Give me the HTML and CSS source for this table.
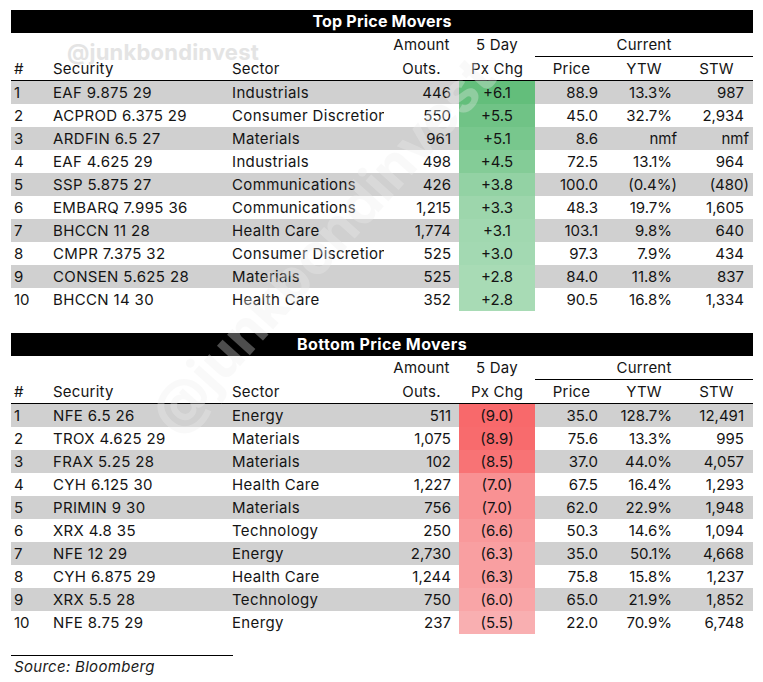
FILE: index.html
```html
<!DOCTYPE html>
<html>
<head>
<meta charset="utf-8">
<link rel="stylesheet" href="styles.css">
</head>
<body>
<div class="page">
  <div class="bar">Top Price Movers</div>
  <table class="movers">
    <colgroup>
      <col class="c-rank"><col class="c-sec"><col class="c-sector"><col class="c-amt"><col class="c-chg"><col class="c-px"><col class="c-ytw"><col class="c-stw">
    </colgroup>
    <thead>
      <tr class="h1"><th></th><th></th><th></th><th>Amount</th><th>5 Day</th><th colspan="3" class="current">Current</th></tr>
      <tr class="h2"><th class="l rank">#</th><th class="l">Security</th><th class="l">Sector</th><th>Outs.</th><th>Px Chg</th><th>Price</th><th>YTW</th><th>STW</th></tr>
    </thead>
    <tbody>
      <tr><td class="rank">1</td><td class="t">EAF 9.875 29</td><td class="t">Industrials</td><td class="n amt">446</td><td class="chg" style="background:#63be7b">+6.1</td><td class="n px">88.9</td><td class="n ytw">13.3%</td><td class="n stw">987</td></tr>
      <tr><td class="rank">2</td><td class="t">ACPROD 6.375 29</td><td class="t">Consumer Discretionary</td><td class="n amt">550</td><td class="chg" style="background:#70c386">+5.5</td><td class="n px">45.0</td><td class="n ytw">32.7%</td><td class="n stw">2,934</td></tr>
      <tr><td class="rank">3</td><td class="t">ARDFIN 6.5 27</td><td class="t">Materials</td><td class="n amt">961</td><td class="chg" style="background:#78c78d">+5.1</td><td class="n px">8.6</td><td class="n ytw np">nmf</td><td class="n stw np">nmf</td></tr>
      <tr><td class="rank">4</td><td class="t">EAF 4.625 29</td><td class="t">Industrials</td><td class="n amt">498</td><td class="chg" style="background:#84cc97">+4.5</td><td class="n px">72.5</td><td class="n ytw">13.1%</td><td class="n stw">964</td></tr>
      <tr><td class="rank">5</td><td class="t">SSP 5.875 27</td><td class="t">Communications</td><td class="n amt">426</td><td class="chg" style="background:#93d2a4">+3.8</td><td class="n px">100.0</td><td class="n ytw np">(0.4%)</td><td class="n stw np">(480)</td></tr>
      <tr><td class="rank">6</td><td class="t">EMBARQ 7.995 36</td><td class="t">Communications</td><td class="n amt">1,215</td><td class="chg" style="background:#9dd6ac">+3.3</td><td class="n px">48.3</td><td class="n ytw">19.7%</td><td class="n stw">1,605</td></tr>
      <tr><td class="rank">7</td><td class="t">BHCCN 11 28</td><td class="t">Health Care</td><td class="n amt">1,774</td><td class="chg" style="background:#a1d8b0">+3.1</td><td class="n px">103.1</td><td class="n ytw">9.8%</td><td class="n stw">640</td></tr>
      <tr><td class="rank">8</td><td class="t">CMPR 7.375 32</td><td class="t">Consumer Discretionary</td><td class="n amt">525</td><td class="chg" style="background:#a3d9b2">+3.0</td><td class="n px">97.3</td><td class="n ytw">7.9%</td><td class="n stw">434</td></tr>
      <tr><td class="rank">9</td><td class="t">CONSEN 5.625 28</td><td class="t">Materials</td><td class="n amt">525</td><td class="chg" style="background:#a8dbb5">+2.8</td><td class="n px">84.0</td><td class="n ytw">11.8%</td><td class="n stw">837</td></tr>
      <tr><td class="rank">10</td><td class="t">BHCCN 14 30</td><td class="t">Health Care</td><td class="n amt">352</td><td class="chg" style="background:#a8dbb5">+2.8</td><td class="n px">90.5</td><td class="n ytw">16.8%</td><td class="n stw">1,334</td></tr>
    </tbody>
  </table>

  <div class="bar second">Bottom Price Movers</div>
  <table class="movers">
    <colgroup>
      <col class="c-rank"><col class="c-sec"><col class="c-sector"><col class="c-amt"><col class="c-chg"><col class="c-px"><col class="c-ytw"><col class="c-stw">
    </colgroup>
    <thead>
      <tr class="h1"><th></th><th></th><th></th><th>Amount</th><th>5 Day</th><th colspan="3" class="current">Current</th></tr>
      <tr class="h2"><th class="l rank">#</th><th class="l">Security</th><th class="l">Sector</th><th>Outs.</th><th>Px Chg</th><th>Price</th><th>YTW</th><th>STW</th></tr>
    </thead>
    <tbody>
      <tr><td class="rank">1</td><td class="t">NFE 6.5 26</td><td class="t">Energy</td><td class="n amt">511</td><td class="chg" style="background:#f8696b">(9.0)</td><td class="n px">35.0</td><td class="n ytw">128.7%</td><td class="n stw">12,491</td></tr>
      <tr><td class="rank">2</td><td class="t">TROX 4.625 29</td><td class="t">Materials</td><td class="n amt">1,075</td><td class="chg" style="background:#f86b6d">(8.9)</td><td class="n px">75.6</td><td class="n ytw">13.3%</td><td class="n stw">995</td></tr>
      <tr><td class="rank">3</td><td class="t">FRAX 5.25 28</td><td class="t">Materials</td><td class="n amt">102</td><td class="chg" style="background:#f87375">(8.5)</td><td class="n px">37.0</td><td class="n ytw">44.0%</td><td class="n stw">4,057</td></tr>
      <tr><td class="rank">4</td><td class="t">CYH 6.125 30</td><td class="t">Health Care</td><td class="n amt">1,227</td><td class="chg" style="background:#f99193">(7.0)</td><td class="n px">67.5</td><td class="n ytw">16.4%</td><td class="n stw">1,293</td></tr>
      <tr><td class="rank">5</td><td class="t">PRIMIN 9 30</td><td class="t">Materials</td><td class="n amt">756</td><td class="chg" style="background:#f99193">(7.0)</td><td class="n px">62.0</td><td class="n ytw">22.9%</td><td class="n stw">1,948</td></tr>
      <tr><td class="rank">6</td><td class="t">XRX 4.8 35</td><td class="t">Technology</td><td class="n amt">250</td><td class="chg" style="background:#f9999b">(6.6)</td><td class="n px">50.3</td><td class="n ytw">14.6%</td><td class="n stw">1,094</td></tr>
      <tr><td class="rank">7</td><td class="t">NFE 12 29</td><td class="t">Energy</td><td class="n amt">2,730</td><td class="chg" style="background:#f99fa1">(6.3)</td><td class="n px">35.0</td><td class="n ytw">50.1%</td><td class="n stw">4,668</td></tr>
      <tr><td class="rank">8</td><td class="t">CYH 6.875 29</td><td class="t">Health Care</td><td class="n amt">1,244</td><td class="chg" style="background:#f99fa1">(6.3)</td><td class="n px">75.8</td><td class="n ytw">15.8%</td><td class="n stw">1,237</td></tr>
      <tr><td class="rank">9</td><td class="t">XRX 5.5 28</td><td class="t">Technology</td><td class="n amt">750</td><td class="chg" style="background:#f9a5a7">(6.0)</td><td class="n px">65.0</td><td class="n ytw">21.9%</td><td class="n stw">1,852</td></tr>
      <tr><td class="rank">10</td><td class="t">NFE 8.75 29</td><td class="t">Energy</td><td class="n amt">237</td><td class="chg" style="background:#f9afb1">(5.5)</td><td class="n px">22.0</td><td class="n ytw">70.9%</td><td class="n stw">6,748</td></tr>
    </tbody>
  </table>

  <div class="source">Source: Bloomberg</div>

  <div class="wm-top">@junkbondinvest</div>
  <div class="wm-diag">@junkbondinvest</div>
</div>
</body>
</html>
```

FILE: styles.css
```css
html, body {
  margin: 0;
  padding: 0;
  background: #ffffff;
}

body {
  font-family: "Inter", "Liberation Sans", sans-serif;
  color: #141414;
}

.page {
  position: relative;
  width: 742px;
  padding: 10px 10px 0 11px;
  overflow: hidden;
  height: 672px;
}

.bar {
  height: 23px;
  line-height: 23px;
  background: #000000;
  color: #ffffff;
  font-weight: 700;
  font-size: 16px;
  text-align: center;
  letter-spacing: 0.2px;
}

.bar.second {
  margin-top: 22px;
  letter-spacing: 0.4px;
}

.movers {
  width: 742px;
  border-collapse: collapse;
  table-layout: fixed;
  font-size: 15px;
}

.c-rank { width: 41px; }
.c-sec { width: 179px; }
.c-sector { width: 153px; }
.c-amt { width: 75px; }
.c-chg { width: 76px; }
.c-px { width: 73px; }
.c-ytw { width: 72px; }
.c-stw { width: 73px; }

.movers th {
  font-weight: 400;
  height: 23px;
  padding: 0;
  text-align: center;
  vertical-align: middle;
  white-space: nowrap;
  letter-spacing: 0.2px;
}

.movers th.l {
  text-align: left;
  padding-left: 1px;
}

.movers th.rank,
.movers td.rank {
  padding-left: 3px;
}

.movers .current {
  border-bottom: 1px solid #000000;
}

.movers .h2 th {
  border-bottom: 1px solid #000000;
}

.movers td {
  height: 23px;
  padding: 0 0 0 1px;
  white-space: nowrap;
  overflow: hidden;
  vertical-align: middle;
}

.movers td.t {
  letter-spacing: 0.35px;
}

.movers tbody tr:nth-child(odd) {
  background: #d0d0d0;
}

.movers td.n {
  text-align: right;
}

.movers td.amt { padding-right: 8px; }
.movers td.px { padding-right: 10px; }
.movers td.ytw { padding-right: 8px; }
.movers td.stw { padding-right: 9px; }
.movers td.ytw.np { padding-right: 3px; }
.movers td.stw.np { padding-right: 4px; }

.movers td.chg {
  text-align: center;
  padding: 0;
}

.source {
  margin-top: 21px;
  width: 219px;
  border-top: 1px solid #000000;
  padding: 1px 0 0 3px;
  font-style: italic;
  font-size: 15px;
  line-height: 19px;
  letter-spacing: 0.3px;
  color: #1a1a1a;
}

.wm-top {
  position: absolute;
  left: 67px;
  top: 41px;
  font-size: 22px;
  font-weight: 700;
  color: #e4e4e4;
  line-height: 22px;
  letter-spacing: 0.2px;
  pointer-events: none;
}

.wm-diag {
  position: absolute;
  left: 322px;
  top: 245px;
  transform: translate(-50%, -50%) rotate(-48deg);
  font-size: 56px;
  font-weight: 700;
  color: #eeeeee;
  opacity: 0.32;
  white-space: nowrap;
  pointer-events: none;
}
```
